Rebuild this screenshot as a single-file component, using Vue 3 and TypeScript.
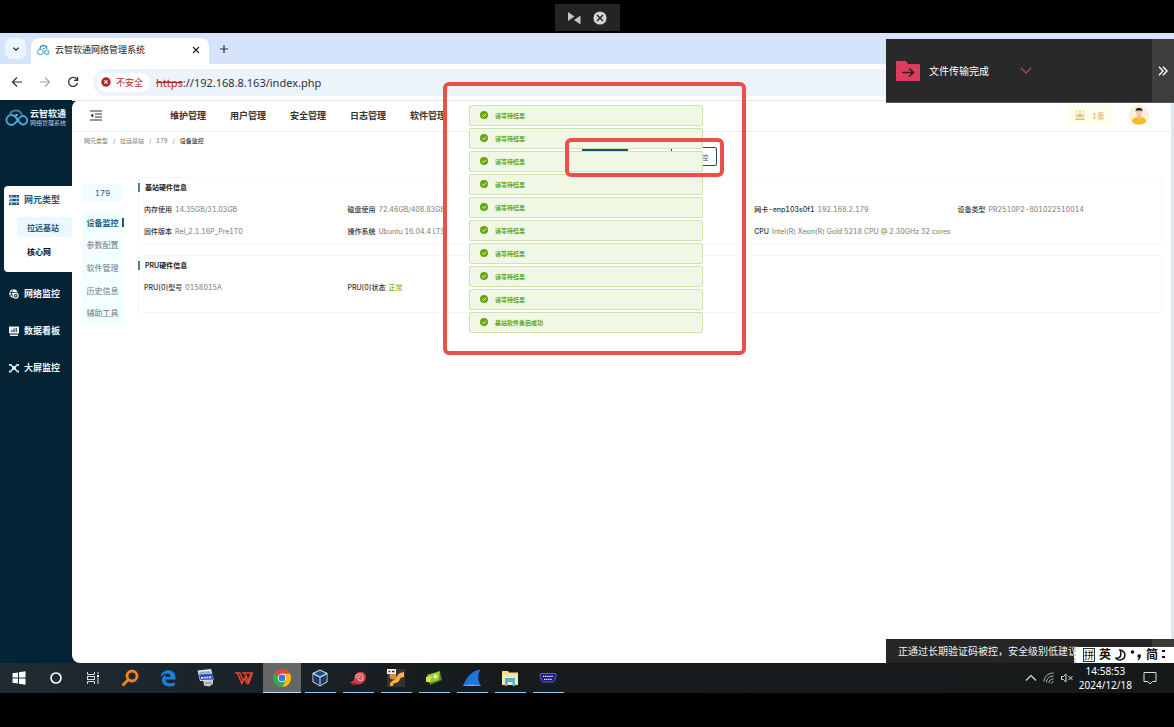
<script setup lang="ts">
import { ref } from 'vue'

interface Field { label: string; value: string; col: number; ok?: boolean }
interface Card { title: string; fields: Field[]; tall?: boolean }

const navItems: string[] = ['维护管理', '用户管理', '安全管理', '日志管理', '软件管理']
const crumbs: string[] = ['网元类型', '拉远基站', '179', '设备监控']
const subMenu: string[] = ['设备监控', '参数配置', '软件管理', '历史信息', '辅助工具']
const activeSub = ref('设备监控')
const address = ref('://192.168.8.163/index.php')

const cards: Card[] = [
  {
    title: '基站硬件信息',
    fields: [
      { label: '内存使用', value: '14.35GB/31.03GB', col: 1 },
      { label: '磁盘使用', value: '72.46GB/408.83GB', col: 2 },
      { label: '网卡-enp103s0f1', value: '192.168.2.179', col: 4 },
      { label: '设备类型', value: 'PR2510P2-801022510014', col: 5 },
      { label: '固件版本', value: 'Rel_2.1.16P_Pre1T0', col: 1 },
      { label: '操作系统', value: 'Ubuntu 16.04.4 LTS', col: 2 },
      { label: 'CPU', value: 'Intel(R) Xeon(R) Gold 5218 CPU @ 2.30GHz 32 cores', col: 4 },
    ],
  },
  {
    title: 'PRU硬件信息',
    tall: true,
    fields: [
      { label: 'PRU[0]型号', value: '0158015A', col: 1 },
      { label: 'PRU[0]状态', value: '正常', col: 2, ok: true },
    ],
  },
]

const toasts: string[] = [...Array<string>(9).fill('请等待结果'), '基站软件重启成功']
</script>

<template>
  <div class="screen">
    <div class="strip top">
      <div class="notch">
        <button aria-label="切换">
          <svg width="14" height="14" viewBox="0 0 14 14"><path d="M1 1v9l6.500-4.500zM13.500 4.500v9L7 9z" fill="#c4c4c4" /></svg>
        </button>
        <button aria-label="断开">
          <svg width="14" height="14" viewBox="0 0 14 14"><circle cx="7" cy="7" r="6.6" fill="#d2d2d2" /><path d="M4 4l6 6M10 4l-6 6" stroke="#222" stroke-width="1.4" /></svg>
        </button>
      </div>
    </div>

    <div class="desktop">
      <div class="tabs">
        <button class="tab-list" aria-label="搜索标签页">
          <svg width="8" height="8" viewBox="0 0 8 8"><path d="M1.3 2.6L4 5.2l2.7-2.6" fill="none" stroke="#222" stroke-width="1.3" /></svg>
        </button>
        <div class="tab">
          <svg width="13" height="12" viewBox="0 0 34 30"><path d="M9 27a7 7 0 1 1 3-13c4 3 7 11 12 13a6 6 0 0 0 2-12c-6 0-8 12-17 12z" fill="none" stroke="#52b4cf" stroke-width="3" /><path d="M8 13a9 9 0 0 1 18-1" fill="none" stroke="#2c86b5" stroke-width="3.500" /><circle cx="18" cy="11" r="2.500" fill="#3b9fc4" /></svg>
          <span>云智软通网络管理系统</span>
          <button aria-label="关闭标签页">
            <svg width="8" height="8" viewBox="0 0 8 8"><path d="M1 1l6 6M7 1L1 7" stroke="#222" stroke-width="1.2" /></svg>
          </button>
        </div>
        <button class="new-tab" aria-label="新标签页">
          <svg width="10" height="10" viewBox="0 0 10 10"><path d="M5 1v8M1 5h8" stroke="#333" stroke-width="1.2" /></svg>
        </button>
      </div>

      <div class="toolbar">
        <button aria-label="后退"><svg width="12" height="12" viewBox="0 0 12 12"><path d="M11 6H2M6 1.5L1.5 6 6 10.5" fill="none" stroke="#333" stroke-width="1.2" /></svg></button>
        <button aria-label="前进"><svg width="12" height="12" viewBox="0 0 12 12"><path d="M1 6h9M6 1.5L10.500 6 6 10.5" fill="none" stroke="#a5a5a5" stroke-width="1.2" /></svg></button>
        <button aria-label="刷新"><svg width="12" height="12" viewBox="0 0 12 12"><path d="M10 3.6A4.500 4.500 0 1 0 10.500 7M10.500 1v3.400H7" fill="none" stroke="#333" stroke-width="1.3" /></svg></button>
        <div class="address">
          <button class="unsafe">
            <svg width="10" height="10" viewBox="0 0 10 10"><circle cx="5" cy="5" r="4.700" fill="#b3261e" /><path d="M3.400 3.400l3.200 3.200M6.600 3.400L3.400 6.600" stroke="#fff" stroke-width="1.200" /></svg>
            不安全
          </button>
          <label for="url"><s>https</s></label>
          <input id="url" v-model="address" type="text" />
        </div>
      </div>

      <div class="page">
        <aside class="sidebar">
          <a class="brand" href="#">
            <svg width="23" height="18" viewBox="0 0 46 36">
              <path d="M13 32a10 10 0 1 1 7-17c5 5 8 14 15 16a8.500 8.500 0 1 0-3-16c-7 3-9 17-19 17z" fill="none" stroke="#4aaed6" stroke-width="3.600" />
              <path d="M9 13a13 13 0 0 1 25-1" fill="none" stroke="#2d7fb8" stroke-width="3.600" />
              <circle cx="23" cy="12" r="2.500" fill="#6cc4e6" />
            </svg>
            <span><b>云智软通</b><small>网络管理系统</small></span>
          </a>
          <div class="group">
            <a class="item current" href="#">
              <svg width="10" height="10" viewBox="0 0 10 10"><path d="M0 0h10v2.600H0zM1 3.700h9v2.600H0zM0 7.400h10V10H0z" fill="#1d5a80" /><path d="M1.500 1.300h2M1.500 5h2M1.500 8.700h2M7 1.300h1M7 5h1M7 8.700h1" stroke="#d8eef8" /></svg>
              网元类型
            </a>
            <a class="leaf on" href="#">拉远基站</a>
            <a class="leaf" href="#">核心网</a>
          </div>
          <a class="item" href="#">
            <svg width="10" height="10" viewBox="0 0 10 10"><circle cx="4.500" cy="4.500" r="4.300" fill="#eef5f8" /><path d="M.5 3.500h8M.5 6h4M4 .5C2 3 2 6 4 8" stroke="#042334" stroke-width=".8" fill="none" /><circle cx="6.800" cy="6.800" r="2.400" fill="#042334" stroke="#eef5f8" stroke-width="1.200" /><circle cx="6.800" cy="6.800" r=".8" fill="#fff" /></svg>
            网络监控
          </a>
          <a class="item" href="#">
            <svg width="10" height="10" viewBox="0 0 10 10"><path d="M0 .5h10v7H0zM1 8.500h8V10H1z" fill="#eef5f8" /><path d="M3 6V4M5 6V2.500M7.200 6V2" stroke="#042334" /></svg>
            数据看板
          </a>
          <a class="item" href="#">
            <svg width="10" height="10" viewBox="0 0 10 10"><path d="M1.500 1.500l7 7M8.500 1.500l-7 7" stroke="#eef5f8" stroke-width="1.500" /><path d="M0 1h2.500L0 3.500zM10 1v2.500L7.500 1zM0 9.500V7l2.500 2.500zM10 9.500H7.500L10 7z" fill="#eef5f8" /><circle cx="5" cy="5" r="2" fill="#eef5f8" /></svg>
            大屏监控
          </a>
        </aside>

        <main class="panel">
          <header class="header">
            <button class="fold" aria-label="收起菜单">
              <svg width="12" height="11" viewBox="0 0 12 11"><path d="M0 1h12M5 4h7M5 7h7M0 10h12" stroke="#333" /><path d="M3.200 3.300v4.400L.5 5.500z" fill="#333" /></svg>
            </button>
            <nav class="nav">
              <a v-for="n in navItems" :key="n" href="#">{{ n }}</a>
            </nav>
            <button class="alarm">
              <svg width="10" height="10" viewBox="0 0 10 10"><path d="M.5 9.500h9M2 9V5.500h6V9M3 5.500a2 2 0 0 1 4 0M5 0v1.800M1 1.300l1.300 1.400M9 1.300L7.700 2.700M0 5h1M9 5h1" fill="none" stroke="#f0ae32" /><circle cx="5" cy="7" r="1" fill="#f0ae32" /></svg>
              1条
            </button>
            <button class="avatar" aria-label="用户">
              <svg width="20" height="20" viewBox="0 0 20 20"><circle cx="10" cy="10" r="10" fill="#fdf0d9" /><path d="M3 17c0-4 3-5 7-5s7 1 7 5a10 10 0 0 1-14 0z" fill="#fbb926" /><path d="M8 10h4v3l-2 1.500L8 13z" fill="#f3b89b" /><circle cx="10" cy="7.500" r="3" fill="#fac9ae" /><path d="M6.800 7V4.200C8 2.800 12 2.500 13.300 4.500V7l-.8-1.500H7.500z" fill="#231f20" /></svg>
            </button>
          </header>

          <div class="bar">
            <nav class="crumbs" aria-label="路径">
              <template v-for="(c, i) in crumbs" :key="c">
                <i v-if="i">/</i><a href="#" :class="{ here: i === crumbs.length - 1 }">{{ c }}</a>
              </template>
            </nav>
            <div class="actions">
              <button class="primary">重启</button>
              <button class="outline">设备监控</button>
            </div>
          </div>

          <div class="body">
            <div class="side">
              <button class="cell">179</button>
              <div class="menu">
                <button v-for="s in subMenu" :key="s" :class="{ on: s === activeSub }" @click="activeSub = s">{{ s }}</button>
              </div>
            </div>
            <div class="cards">
              <section v-for="c in cards" :key="c.title" class="card" :class="{ tall: c.tall }">
                <h2>{{ c.title }}</h2>
                <dl>
                  <div v-for="f in c.fields" :key="f.label" :class="'c' + f.col">
                    <dt>{{ f.label }}</dt>
                    <dd :class="{ ok: f.ok }">{{ f.value }}</dd>
                  </div>
                </dl>
              </section>
            </div>
          </div>
        </main>
      </div>

      <div class="toasts" role="status">
        <div v-for="(t, i) in toasts" :key="i" class="toast">
          <svg width="8" height="8" viewBox="0 0 8 8"><circle cx="4" cy="4" r="4" fill="#64a80c" /><path d="M2.200 4l1.400 1.400 2.300-2.500" fill="none" stroke="#f0f9e4" /></svg>
          {{ t }}
        </div>
      </div>
      <div class="mark large"></div>
      <div class="mark small"></div>

      <div class="transfer">
        <svg width="24" height="22" viewBox="0 0 24 22"><path d="M1 1h9l2 3h11a1 1 0 0 1 1 1v15a1 1 0 0 1-1 1H1a1 1 0 0 1-1-1V2a1 1 0 0 1 1-1z" fill="#dc3d5e" /><path d="M6 12.500h11M13 8.500l4.500 4-4.500 4" fill="none" stroke="#2a2022" stroke-width="1.500" /></svg>
        <span>文件传输完成</span>
        <button aria-label="展开"><svg width="12" height="8" viewBox="0 0 12 8"><path d="M1 1l5 5 5-5" fill="none" stroke="#d43b5c" stroke-width="1.200" /></svg></button>
        <button class="more" aria-label="收起"><svg width="10" height="10" viewBox="0 0 10 10"><path d="M1 .8L5 5 1 9.200M5 .8L9 5 5 9.200" fill="none" stroke="#fff" stroke-width="1.400" /></svg></button>
      </div>
      <div class="notice">正通过长期验证码被控，安全级别低建议</div>
      <div class="ime">
        <span class="boxed">拼</span><b>英</b>
        <svg width="11" height="12" viewBox="0 0 11 12"><path d="M5 1c6 1 7 9 0 10-2 0-4-1-4-2 5 1 6-4 4-8z" fill="#fff" stroke="#111" stroke-width="1.500" /></svg>
        <svg width="12" height="12" viewBox="0 0 12 12"><circle cx="2.500" cy="3" r="1.800" fill="#111" /><path d="M7.500 5.500h3.500c0 3-1 5-3 6l-.5-1c1-.5 1.200-1 1.200-2H7.500z" fill="#111" /></svg>
        <b>简</b>
        <svg width="4" height="10" viewBox="0 0 4 10"><path d="M0 0h3v2H0zM0 6h3v2H0z" fill="#111" /></svg>
      </div>
    </div>

    <footer class="taskbar">
      <button class="sys" aria-label="开始"><svg width="14" height="14" viewBox="0 0 14 14"><path d="M.5 2.300l5.500-.8v5H.5zM7 1.300l6.500-1v6.200H7zM.5 7.500H6v5l-5.500-.8zM7 7.500h6.500v6.200l-6.500-1z" fill="#fff" /></svg></button>
      <button class="sys" aria-label="搜索"><svg width="14" height="14" viewBox="0 0 14 14"><circle cx="7" cy="7" r="5" fill="none" stroke="#fff" stroke-width="1.700" /></svg></button>
      <button class="sys" aria-label="任务视图"><svg width="14" height="14" viewBox="0 0 14 14"><path d="M1.500 1v2.500h7V1M1.500 13v-2.500h7V13M1.500 5v4M8.500 5v4M1.500 5.500h7M1.500 8.500h7M12 1v2M12 7v6" fill="none" stroke="#ddd" /><path d="M11 4h2v2.200h-2z" fill="#fff" /></svg></button>
      <button class="app" aria-label="查找"><svg width="18" height="18" viewBox="0 0 18 18"><circle cx="11" cy="7" r="5" fill="none" stroke="#f58220" stroke-width="2.800" /><path d="M7.500 10.500L1.500 16.500" stroke="#f58220" stroke-width="3" /></svg></button>
      <button class="app" aria-label="Edge"><svg width="18" height="18" viewBox="0 0 18 18"><path d="M1.500 8C2.500-.5 16-1.500 16.500 8.500v2H6.500c0 4 5.500 5 9.300 2.800v3.200C9 19.500 2.500 16 3 10.500 3.500 7.500 6 6 7.500 5.500 6.500 6.500 6.300 7.500 6.300 8h5.200c0-5-6.500-4.500-10 0z" fill="#1683dc" /></svg></button>
      <button class="app" aria-label="远程"><svg width="18" height="18" viewBox="0 0 18 18"><path d="M6 10h10v5l-4 2.500-5-1z" fill="#c9cbd1" /><path d="M.5 1.500L14 0l3 11L3 12z" fill="#dfe6ee" /><path d="M2 3l11-1 .3 2L3 5z" fill="#8fa6c4" /><path d="M2 5.500l14-1 1 6L3.500 11z" fill="#2455bd" /><path d="M4 9l11-.8" stroke="#d5e2fb" stroke-width="1.800" stroke-dasharray="2 .7" /><path d="M8 14h7" stroke="#777" /></svg></button>
      <button class="app" aria-label="WPS"><svg width="18" height="18" viewBox="0 0 18 18"><path d="M0 4h5l3 7.500M2.500 4l4.300 10.500L11 6.500 9.500 4H7M11 6.500l2 5.500 3.500-8M9.500 4h8l-4 10.500h-1.500L9.800 9" fill="none" stroke="#e5452f" stroke-width="1.500" /></svg></button>
      <button class="app active" aria-label="Chrome"><svg width="18" height="18" viewBox="0 0 18 18"><path d="M9 9L1.200 4.500A9 9 0 0 1 16.800 4.500H9z" fill="#ea4335" /><path d="M16.800 4.500A9 9 0 0 1 9 18l4-6.700L9 4.500z" fill="#fbbc05" /><path d="M1.200 4.500A9 9 0 0 0 9 18l4-6.700L9 9z" fill="#34a853" /><circle cx="9" cy="9" r="4.300" fill="#fff" /><circle cx="9" cy="9" r="3.400" fill="#3578e5" /></svg></button>
      <button class="app run" aria-label="VirtualBox"><svg width="18" height="18" viewBox="0 0 18 18"><path d="M9 .5L16.500 4v9L9 17.500 1.500 13V4z" fill="#d4e0ec" /><path d="M9 1.500l6 3L9 7.500 3 4.500z" fill="#1f4f84" /><path d="M2 5.500L8.500 8.500v8L2.500 12.500zM16 5.500L9.500 8.500v8l6-4z" fill="#183b66" /></svg></button>
      <button class="app run" aria-label="终端"><svg width="18" height="18" viewBox="0 0 18 18"><path d="M1 13c4 0 4-3 5-6 1-5 9-6 10.500-1 2 7-5 11-12 9z" fill="#cf4046" /><path d="M6.500 9c0-5 7-5 7.500-1s-4 4.500-5 2 2.500-3.500 2.500-1" fill="none" stroke="#f3a2a0" stroke-width="1.400" /><path d="M1 13l3 2 4-.5" stroke="#a8252d" stroke-width="1.500" fill="none" /></svg></button>
      <button class="app run" aria-label="工具"><svg width="20" height="20" viewBox="0 0 20 20"><path d="M1 1h18v18H1z" fill="#38332e" /><path d="M4 18c0-6 3-4 6-8s2-5 8-6v5c-5 0-3 3-6 5s-5 0-5 4z" fill="#f5b63e" /><circle cx="7" cy="8" r="3.500" fill="#e8863a" /><path d="M1 1h9v5H1z" fill="#f4f4f4" /><path d="M2.500 3.500h2M6 3.500h2.500" stroke="#333" stroke-width="1.500" /></svg></button>
      <button class="app run" aria-label="显卡"><svg width="18" height="18" viewBox="0 0 18 18"><path d="M4 6l11-3 2 8-12 5z" fill="#4f8b1b" /><path d="M2 6l13-4-1 9-10 3z" fill="#98c928" /><path d="M1 8l6-1-2 6H1z" fill="#c9e75c" /><path d="M8 7.500h5M10.500 5v5" stroke="#edf7c2" stroke-width="1.500" /></svg></button>
      <button class="app run" aria-label="Wireshark"><svg width="20" height="18" viewBox="0 0 20 18"><path d="M1 17C4 9 9 2 18.500.5 15 6 16 12 19 17z" fill="#2274d8" /><path d="M1 17c5-2 11-2 18 0z" fill="#6caef5" /></svg></button>
      <button class="app run" aria-label="文件资源管理器"><svg width="18" height="18" viewBox="0 0 18 18"><path d="M1 2h6l1 1.500h9V16H1z" fill="#f8dc84" /><path d="M1 5.500h16V16H1z" fill="#fbe9a6" /><path d="M4 9h10v8h-2.500v-4h-5v4H4z" fill="#4cb3dd" /></svg></button>
      <button class="app run" aria-label="串口"><svg width="18" height="18" viewBox="0 0 18 18"><path d="M2 4.500h14q1.500 0 1 2l-1.500 5q-.5 1.500-2 1.500h-9q-1.500 0-2-1.500L1 6.500q-.5-2 1-2z" fill="#1d1c86" stroke="#6564b8" /><path d="M4 7.300h10M5 10.300h8" stroke="#fff" stroke-width="1.300" stroke-dasharray="1.300 .8" /></svg></button>

      <div class="tray">
        <button aria-label="隐藏的图标"><svg width="12" height="8" viewBox="0 0 12 8"><path d="M1 6.500l5-5 5 5" fill="none" stroke="#ddd" stroke-width="1.200" /></svg></button>
        <button aria-label="网络"><svg width="12" height="12" viewBox="0 0 12 12"><path d="M1 9.500C1 5 5 1 10.500 1M3.500 10.500c0-4 3-6.500 7-6.500M6 11c0-2.500 2-4.200 4.500-4.200M8.500 11.500c0-1 .8-2 2-2" fill="none" stroke="#bbb" /></svg></button>
        <button aria-label="静音"><svg width="12" height="10" viewBox="0 0 12 10"><path d="M.5 3.500h1.800L5 1v8L2.300 6.500H.5zM7.500 3l4 4M11.500 3l-4 4" fill="none" stroke="#ddd" /></svg></button>
        <div class="clock"><span>14:58:53</span><span>2024/12/18</span></div>
        <button aria-label="通知"><svg width="14" height="14" viewBox="0 0 14 14"><path d="M1 1.500h12v9H9.500L7 13l-2-2.500H1z" fill="none" stroke="#ddd" /></svg></button>
      </div>
    </footer>
    <div class="strip foot"></div>
  </div>
</template>

<style>
body { margin: 0; background: #000; }
</style>

<style scoped>
* { box-sizing: border-box; }
.screen { display: flex; flex-direction: column; min-height: 100vh; background: #000; overflow: hidden; font-family: Inter, "Noto Sans CJK SC", sans-serif; font-variant-numeric: tabular-nums; }
button { border: 0; padding: 0; background: none; font: inherit; color: inherit; cursor: pointer; display: flex; align-items: center; justify-content: center; }
a { color: inherit; text-decoration: none; white-space: nowrap; }
svg { display: block; flex: none; }
.strip.top { height: 33px; display: flex; justify-content: center; align-items: flex-end; padding-bottom: 2px; }
.strip.foot { height: 34px; }
.notch { height: 27px; width: 65px; background: #242424; display: flex; align-items: center; justify-content: center; gap: 12px; }
.desktop { position: relative; flex: 1; display: flex; flex-direction: column; overflow: hidden; }

.tabs { height: 31px; background: #d5e3fb; display: flex; align-items: flex-end; padding-left: 5px; font-family: "Noto Sans", "Noto Sans CJK SC", sans-serif; }
.tab-list { width: 21px; height: 21px; margin-bottom: 5px; border-radius: 7px; background: #edf6fe; }
.tab { width: 178px; height: 26px; margin-left: 5px; padding: 0 9px 3px 6px; display: flex; align-items: center; gap: 5px; background: #fff; border-radius: 8px 8px 0 0; font-size: 9px; color: #222; }
.tab button { margin-left: auto; }
.new-tab { width: 30px; height: 30px; }
.toolbar { height: 36px; background: #fff; display: flex; align-items: center; padding-left: 11px; gap: 16px; font-family: "Noto Sans", "Noto Sans CJK SC", sans-serif; }
.address { flex: 1; height: 27px; margin-left: -2px; padding-left: 4px; border-radius: 14px 0 0 14px; background: #ecf3fb; display: flex; align-items: center; }
.unsafe { height: 19px; padding: 0 7px 0 4px; gap: 5px; border-radius: 10px; background: #fff; color: #a8322c; font-size: 9px; }
.address label { margin-left: 6px; font-size: 11px; color: #b3261e; }
.address input { flex: 1; min-width: 0; border: 0; padding: 0; background: none; outline: 0; font: inherit; font-size: 11px; color: #2c3136; }

.page { flex: 1; display: flex; background: #042334; padding-right: 3px; position: relative; box-shadow: inset -3px 0 #dbe9ef; }
.sidebar { width: 72px; display: flex; flex-direction: column; color: #f2f7fa; }
.brand { height: 35px; padding-left: 5px; display: flex; align-items: center; gap: 2px; }
.brand span { display: flex; flex-direction: column; }
.brand b { font-size: 9px; line-height: 11px; font-weight: 700; }
.brand small { font-size: 6px; line-height: 8px; color: #b8cad5; }
.group { margin: 51px 0 3px 4px; padding-bottom: 11px; background: #fff; border-radius: 4px 0 0 4px; }
.item { height: 37px; display: flex; align-items: center; gap: 5px; padding-left: 9px; font-size: 9px; font-weight: 700; }
.item.current { height: 27px; padding-left: 5px; color: #1d5a80; font-weight: 600; }
.leaf { display: flex; align-items: center; height: 20px; margin: 4px 0 0 13px; padding-left: 10px; font-size: 8px; color: #111; font-weight: 600; }
.leaf.on { background: #ebf9ff; color: #1d5a80; border-radius: 3px 0 0 3px; }

.panel { flex: 1; min-width: 0; background: #fff; border-radius: 8px 0 0 8px; color: #333; }
.header { height: 32px; display: flex; align-items: center; padding: 0 22px 2px 18px; border-top: 1px solid #e4e8ea; border-bottom: 1px solid #eee; }
.nav { display: flex; gap: 24px; margin: 0 auto 0 68px; font-size: 9px; font-weight: 600; color: #333; }
.alarm { width: 44px; height: 20px; gap: 7px; background: #fffdec; color: #f0ae32; font-size: 8px; }
.avatar { margin-left: 17px; }

.bar { height: 45px; display: grid; grid-template-columns: 11fr 13fr; padding-left: 12px; }
.crumbs { display: flex; gap: 4px; font-size: 6px; line-height: 18px; color: #777; }
.crumbs i { font-style: normal; width: 4px; text-align: center; }
.crumbs .here { color: #333; font-weight: 500; }
.actions { display: flex; gap: 43px; padding-top: 15px; }
.actions button { height: 19px; border-radius: 2px; font-size: 7px; white-space: nowrap; }
.primary { width: 46px; background: #18506f; color: #fff; }
.outline { width: 46px; border: 1px solid #18506f; color: #18506f; }

.body { display: flex; gap: 15px; padding: 0 9px 0 10px; }
.side { width: 41px; padding-top: 7px; font-size: 8px; }
.cell { width: 100%; height: 18px; background: #f0fcff; color: #1d5a80; font-size: 8px; }
.menu { min-height: 115px; margin-top: 8px; padding: 1px 0; background: #f3feff; display: flex; flex-direction: column; align-items: center; color: #777; }
.menu button { flex: 1; width: 100%; position: relative; white-space: nowrap; }
.menu .on { color: #1d5a80; font-weight: 600; }
.menu .on::after { content: ""; position: absolute; right: -1px; top: 7px; width: 2px; height: 9px; background: #1d5a80; }
.cards { flex: 1; min-width: 0; display: flex; flex-direction: column; gap: 10px; }
.card { border: 1px solid #f6f6f6; border-radius: 3px; padding: 5px 0 2px; font-size: 7px; }
.card.tall { padding-bottom: 14px; }
h2 { margin: 0 0 0 -1px; padding-left: 5px; border-left: 2px solid #4d8298; font-size: 7px; line-height: 9px; font-weight: 600; color: #222; }
dl { margin: 3px 0 0; padding-left: 5px; display: grid; grid-template-columns: repeat(5, 1fr); grid-auto-rows: 22px; padding-top: 3px; }
dl div { display: flex; align-items: center; gap: 3px; white-space: nowrap; }
.c1 { grid-column: 1; } .c2 { grid-column: 2; } .c4 { grid-column: 4; } .c5 { grid-column: 5; }
dt { color: #333; font-weight: 500; }
dd { margin: 0; color: #777; }
dd.ok { color: #79b51c; font-weight: 500; }

.toasts { position: absolute; top: 72px; left: 469px; width: 234px; display: flex; flex-direction: column; gap: 2px; }
.toast { height: 21px; padding: 0 0 1px 10px; display: flex; align-items: center; gap: 7px; border: 1px solid #cfe3b0; border-radius: 2px; background: #f0f8e5; color: #64a80c; font-size: 6px; font-weight: 600; }
.mark { position: absolute; border: 4px solid #ea4f4a; border-radius: 6px; }
.large { left: 443px; top: 49px; width: 303px; height: 273px; }
.small { left: 565px; top: 105px; width: 159px; height: 39px; }

.transfer { position: absolute; top: 6px; right: 0; width: 288px; height: 64px; padding-left: 10px; display: flex; align-items: center; background: #292929; border-bottom: 1px solid #555; color: #fff; font-size: 10px; }
.transfer span { margin: 0 31px 0 9px; }
.transfer .more { width: 22px; align-self: stretch; margin-left: auto; background: #3d3d3d; }
.notice { position: absolute; right: 0; bottom: 0; width: 288px; height: 24px; padding-left: 12px; background: linear-gradient(90deg, #262626 266px, #3a3a3a 266px); color: #f2f2f2; font-size: 10px; line-height: 25px; white-space: nowrap; }
.ime { position: absolute; right: 0; bottom: 0; width: 100px; height: 16px; padding-left: 7px; background: #fff; border-left: 2px dotted #ccc; color: #111; display: flex; align-items: center; gap: 4px; font-size: 12px; line-height: 14px; }
.ime .boxed { border: 1px solid #333; font-size: 10px; line-height: 12px; }

.taskbar { height: 30px; display: flex; background: linear-gradient(90deg, #202b33, #171b1d 40%, #15191a); padding-right: 17px; font-family: "Noto Sans", sans-serif; }
.sys { width: 37px; }
.app { width: 38px; border-bottom: 1px solid transparent; position: relative; }
.app.active { background: #666; border-bottom-color: #b9def5; }
.app.run::after { content: ""; position: absolute; left: 4px; right: 3px; bottom: -1px; height: 1px; background: #9ccbe8; }
.tray { margin-left: auto; display: flex; align-items: center; gap: 6px; color: #fff; }
.clock { display: flex; flex-direction: column; align-items: center; font-size: 10px; line-height: 14px; }
.tray .clock + button { margin-left: 5px; }
</style>
